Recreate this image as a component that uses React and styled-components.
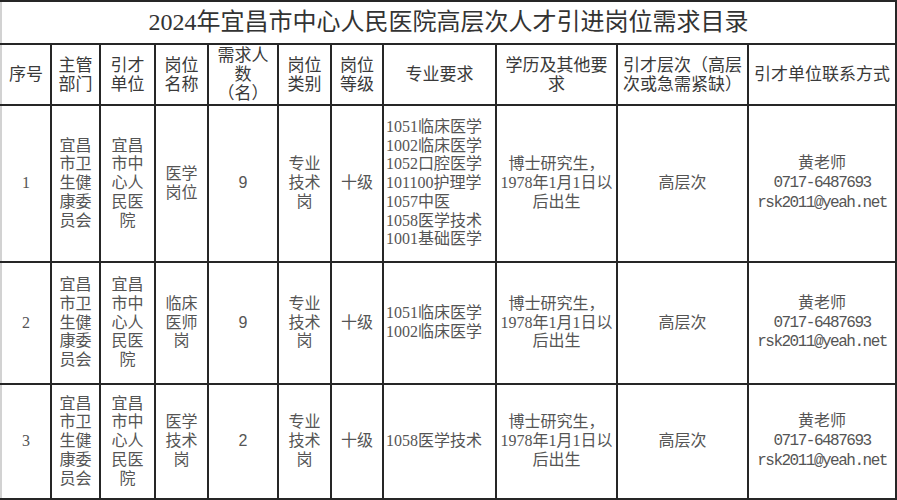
import styled, { createGlobalStyle, css } from 'styled-components';

const GlobalStyle = createGlobalStyle`
  html, body {
    margin: 0;
    padding: 0;
    background: #fff;
  }
`;

const SERIF = `"Liberation Serif", "Noto Sans CJK SC", serif`;
const SANS = `"Liberation Sans", "Noto Sans CJK SC", sans-serif`;
const MONO = `"Liberation Mono", "Noto Sans CJK SC", monospace`;

const widths = [50, 49, 55, 53, 70, 53, 52, 113, 121, 131, 148];

const headers = [
  ['序号'],
  ['主管', '部门'],
  ['引才', '单位'],
  ['岗位', '名称'],
  ['需求人', '数', '（名）'],
  ['岗位', '类别'],
  ['岗位', '等级'],
  ['专业要求'],
  ['学历及其他要', '求'],
  ['引才层次（高层', '次或急需紧缺）'],
  ['引才单位联系方式']
];

const dept = ['宜昌', '市卫', '生健', '康委', '员会'];
const unit = ['宜昌', '市中', '心人', '民医', '院'];
const edu = ['博士研究生，', '1978年1月1日以', '后出生'];

const rows = [
  {
    no: '1',
    height: 157,
    name: ['医学', '岗位'],
    count: '9',
    majors: [
      '1051临床医学',
      '1002临床医学',
      '1052口腔医学',
      '101100护理学',
      '1057中医',
      '1058医学技术',
      '1001基础医学'
    ]
  },
  {
    no: '2',
    height: 122,
    name: ['临床', '医师', '岗'],
    count: '9',
    majors: ['1051临床医学', '1002临床医学']
  },
  {
    no: '3',
    height: 115,
    name: ['医学', '技术', '岗'],
    count: '2',
    majors: ['1058医学技术']
  }
];

function Lines({ items }) {
  return items.map((line, i) => (
    <span key={i}>
      {i > 0 && <br />}
      {line}
    </span>
  ));
}

export default function App() {
  return (
    <>
      <GlobalStyle />
      <Page>
        <Table>
          <colgroup>
            {widths.map((w, i) => (
              <col key={i} style={{ width: w }} />
            ))}
          </colgroup>
          <tbody>
            <Row $h={43}>
              <TitleCell colSpan={11}>
                2024年宜昌市中心人民医院高层次人才引进岗位需求目录
              </TitleCell>
            </Row>
            <Row $h={61}>
              {headers.map((h, i) => (
                <HeadCell key={i}>
                  <Lines items={h} />
                </HeadCell>
              ))}
            </Row>
            {rows.map((r) => (
              <Row key={r.no} $h={r.height}>
                <Cell>{r.no}</Cell>
                <Cell>
                  <Lines items={dept} />
                </Cell>
                <Cell>
                  <Lines items={unit} />
                </Cell>
                <Cell>
                  <Lines items={r.name} />
                </Cell>
                <Cell $font="sans">{r.count}</Cell>
                <Cell>
                  <Lines items={['专业', '技术', '岗']} />
                </Cell>
                <Cell>十级</Cell>
                <Cell $align="left">
                  <Lines items={r.majors} />
                </Cell>
                <Cell>
                  <Lines items={edu} />
                </Cell>
                <Cell>高层次</Cell>
                <Cell>
                  黄老师
                  <br />
                  <Mono>0717-6487693</Mono>
                  <br />
                  <Mono>rsk2011@yeah.net</Mono>
                </Cell>
              </Row>
            ))}
          </tbody>
        </Table>
      </Page>
    </>
  );
}

const Page = styled.div`
  width: 897px;
  height: 500px;
  overflow: hidden;
  background: #fff;
`;

const Table = styled.table`
  width: 895px;
  table-layout: fixed;
  border-collapse: collapse;
  border-spacing: 0;
`;

const Row = styled.tr`
  height: ${({ $h }) => $h}px;
`;

const cellBase = css`
  border: 2px solid #262626;
  padding: 0 1px;
  text-align: center;
  vertical-align: middle;
  overflow: hidden;
  &:first-child {
    border-left: 2px solid #d2d2d2;
  }
`;

const TitleCell = styled.td`
  ${cellBase}
  font-family: ${SERIF};
  font-size: 24px;
  line-height: 28px;
  color: #333;
  padding-bottom: 2px;
`;

const HeadCell = styled.td`
  ${cellBase}
  font-family: ${SANS};
  font-size: 17px;
  line-height: 19px;
  color: #3a3a3a;
`;

const Cell = styled.td`
  ${cellBase}
  font-family: ${({ $font }) => ($font === 'sans' ? SANS : SERIF)};
  font-size: 16px;
  line-height: 18.8px;
  color: #555;
  text-align: ${({ $align }) => $align || 'center'};
  padding-left: ${({ $align }) => ($align === 'left' ? '2px' : '1px')};
  white-space: nowrap;
`;

const Mono = styled.span`
  font-family: ${MONO};
  font-size: 16px;
  letter-spacing: -1.5px;
`;
